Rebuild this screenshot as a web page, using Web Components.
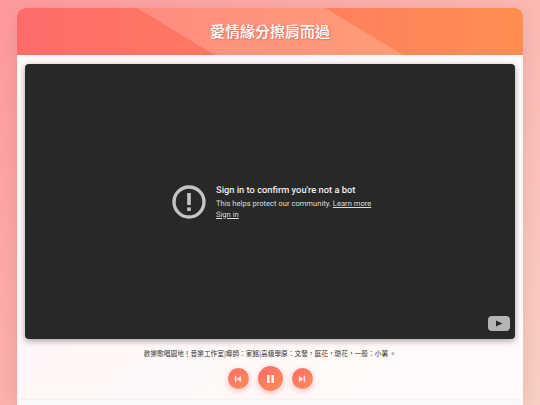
<!DOCTYPE html>
<html lang="zh-Hant">
<head>
<meta charset="utf-8">
<title>愛情緣分擦肩而過</title>
<style>
  html, body { margin: 0; height: 405px; overflow: hidden; }
  body {
    background: linear-gradient(135deg, #ff9a9e 0%, #fad0c4 100%);
    font-family: "Noto Sans CJK SC", "Noto Sans", sans-serif;
  }
</style>
</head>
<body>
<player-card>
  <song-header slot="header">愛情緣分擦肩而過</song-header>
  <video-block></video-block>
  <song-note>歡樂歌唱園地！音樂工作室|導師：家銘|高級學原：文發，庭花，瓊花，一般：小薯 。</song-note>
  <player-controls></player-controls>
</player-card>

<script>
class PlayerCard extends HTMLElement {
  constructor() {
    super();
    this.attachShadow({ mode: "open" });
    this.shadowRoot.innerHTML = `
<style>
  :host {
    display: flex;
    flex-direction: column;
    margin: 8px 17px 0;
    height: 397px;
    border-radius: 8px 8px 0 0;
    overflow: hidden;
    background: rgba(255, 255, 255, 0.9);
    box-shadow: 0 4px 20px rgba(0, 0, 0, 0.1);
  }
  .body {
    flex: 1;
    display: flex;
    flex-direction: column;
    padding: 9px 8px 0;
  }
  .rest {
    flex: 1;
    margin: 0 -7px;
    border-radius: 4px 4px 0 0;
    background: #fbf8f8;
    box-shadow: 0 -1px 2px rgba(0, 0, 0, 0.05);
  }
</style>
<slot name="header"></slot>
<div class="body"><slot></slot><div class="rest"></div></div>
`;
  }
}

class SongHeader extends HTMLElement {
  constructor() {
    super();
    this.attachShadow({ mode: "open" });
    this.shadowRoot.innerHTML = `
<style>
  :host {
    display: flex;
    align-items: center;
    justify-content: center;
    position: relative;
    box-sizing: border-box;
    height: 47px;
    padding-bottom: 2px;
    background: linear-gradient(90deg, #ff6b6b, #ff8e53);
    color: #fff;
    font: 500 15px "Noto Sans CJK SC", sans-serif;
    text-shadow: 1px 1px 2px rgba(0, 0, 0, 0.2);
  }
  .shine {
    position: absolute;
    inset: 0;
    background: rgba(255, 255, 255, 0.18);
    clip-path: polygon(120px 0, 308px 0, 386px 100%, 198px 100%);
  }
  span { position: relative; }
</style>
<div class="shine"></div>
<span><slot></slot></span>
`;
  }
}

class VideoBlock extends HTMLElement {
  constructor() {
    super();
    this.attachShadow({ mode: "open" });
    this.shadowRoot.innerHTML = `
<style>
  :host {
    display: flex;
    flex: none;
    align-items: center;
    justify-content: center;
    position: relative;
    height: 275px;
    border-radius: 4px;
    background: #282828;
    box-shadow: 0 2px 6px rgba(0, 0, 0, 0.35);
    color: #e8e8e8;
    font-family: Roboto, sans-serif;
    text-rendering: geometricPrecision;
  }
  .msg {
    display: flex;
    align-items: center;
    gap: 10px;
    width: 200px;
    margin-left: 4px;
    margin-top: 1px;
  }
  .msg svg { flex: none; width: 34px; height: 34px; }
  h2 { margin: 0 0 2px; font-size: 9.3px; line-height: 13px; font-weight: 500; color: #ececec; white-space: nowrap; }
  p { margin: 0; font-size: 7.6px; line-height: 10.5px; color: #dcdcdc; white-space: nowrap; }
  a { color: inherit; text-decoration: underline; }
  .logo { position: absolute; right: 5px; bottom: 8px; width: 22px; height: 15px; }
</style>
<div class="msg">
  <svg viewBox="0 0 34 34">
    <circle cx="17" cy="17" r="15" fill="none" stroke="#c4c4c4" stroke-width="3.4"/>
    <rect x="15.2" y="8" width="3.6" height="12" fill="#c4c4c4"/>
    <rect x="15.2" y="22.4" width="3.6" height="3.6" fill="#c4c4c4"/>
  </svg>
  <div>
    <h2>Sign in to confirm you're not a bot</h2>
    <p>This helps protect our community. <a>Learn more</a><br><a>Sign in</a></p>
  </div>
</div>
<svg class="logo" viewBox="0 0 22 15">
  <rect width="22" height="15" rx="4" fill="#b5b5b5"/>
  <path d="M8 4.4 14.4 7.5 8 10.6Z" fill="#282828"/>
</svg>
`;
  }
}

class SongNote extends HTMLElement {
  constructor() {
    super();
    this.attachShadow({ mode: "open" });
    this.shadowRoot.innerHTML = `
<style>
  :host {
    display: block;
    flex: none;
    margin-top: 8px;
    text-align: center;
    color: #333;
    font: 6.7px/12px "Noto Sans CJK SC", sans-serif;
    white-space: nowrap;
  }
</style>
<slot></slot>
`;
  }
}

class RoundButton extends HTMLElement {
  constructor() {
    super();
    const size = this.getAttribute("size") || 21;
    this.attachShadow({ mode: "open" });
    this.shadowRoot.innerHTML = `
<style>
  :host {
    display: flex;
    align-items: center;
    justify-content: center;
    width: ${size}px;
    height: ${size}px;
    border-radius: 50%;
    background: linear-gradient(135deg, #ff6b6b, #ff8e53);
    box-shadow: 0 2px 6px rgba(255, 107, 107, 0.4);
  }
  ::slotted(svg) { display: block; }
</style>
<slot></slot>
`;
  }
}

class PlayerControls extends HTMLElement {
  constructor() {
    super();
    this.attachShadow({ mode: "open" });
    this.shadowRoot.innerHTML = `
<style>
  :host {
    display: flex;
    flex: none;
    align-items: center;
    justify-content: center;
    gap: 9px;
    height: 25px;
    margin-top: 7px;
    margin-bottom: 9px;
  }
  svg { fill: rgba(255, 255, 255, 0.85); }
</style>
<round-button>
  <svg width="8" height="8" viewBox="0 0 9 9"><rect x="1" y="1" width="1.6" height="7"/><path d="M8 1V8L3 4.5Z"/></svg>
</round-button>
<round-button size="25">
  <svg width="9" height="10" viewBox="0 0 9 10"><rect x="1" y="1" width="2.6" height="8" rx=".5"/><rect x="5.4" y="1" width="2.6" height="8" rx=".5"/></svg>
</round-button>
<round-button>
  <svg width="8" height="8" viewBox="0 0 9 9"><path d="M1 1V8L6 4.5Z"/><rect x="6.4" y="1" width="1.6" height="7"/></svg>
</round-button>
`;
  }
}

customElements.define("player-card", PlayerCard);
customElements.define("song-header", SongHeader);
customElements.define("video-block", VideoBlock);
customElements.define("song-note", SongNote);
customElements.define("round-button", RoundButton);
customElements.define("player-controls", PlayerControls);
</script>
</body>
</html>
